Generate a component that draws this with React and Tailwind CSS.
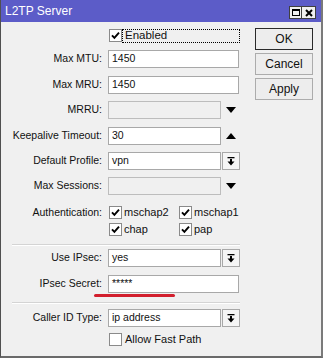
import React from "react";

const Check = ({ checked }) => (
  <span className="w-[13px] h-[13px] border border-[#8a8a8a] bg-white flex items-center justify-center shrink-0">
    {checked && (
      <svg width="9" height="9" viewBox="0 0 9 9">
        <path d="M1 4.3 L3.4 6.8 L8 1.6" stroke="#000" strokeWidth="1.9" fill="none" />
      </svg>
    )}
  </span>
);

const DropBtn = () => (
  <div className="ml-px w-[18px] h-[18px] border border-[#a8a8a8] bg-[#f5f5f5] flex items-center justify-center">
    <svg width="8" height="9" viewBox="0 0 8 9">
      <rect x="0.5" y="0" width="7" height="1.3" fill="#000" />
      <rect x="3" y="2" width="2" height="3" fill="#000" />
      <path d="M0.5 4.5 L7.5 4.5 L4 8.5 Z" fill="#000" />
    </svg>
  </div>
);

const Arrow = ({ up }) => (
  <div className="ml-px w-[18px] flex items-center justify-center">
    <svg width="10" height="6" viewBox="0 0 10 6">
      {up ? <path d="M0 6 L10 6 L5 0 Z" fill="#000" /> : <path d="M0 0 L10 0 L5 6 Z" fill="#000" />}
    </svg>
  </div>
);

const Row = ({ label, mt, children }) => (
  <div className={"flex items-center h-[18px] " + mt}>
    <div className="w-[101px] text-right whitespace-nowrap text-[10.5px]">{label}</div>
    <div className="ml-[6px] flex items-center">{children}</div>
  </div>
);

const Input = ({ value, short, disabled }) => (
  <div
    className={
      "h-[18px] border flex items-center pl-[3px] text-[10.5px] " +
      (short ? "w-[113px] " : "w-[131px] ") +
      (disabled ? "bg-[#f0f0f0] border-[#bdbdbd]" : "bg-white border-[#a8a8a8]")
    }
  >
    {value}
  </div>
);

const Sep = ({ mt }) => (
  <div className={"ml-[11px] w-[228px] border-t border-[#d4d4d4] border-b border-b-white " + mt}></div>
);

const Btn = ({ children, def, mt }) => (
  <div
    className={
      "w-[58px] h-[22px] flex items-center justify-center text-[12px] bg-[#ededed] " +
      (def ? "border border-[#2a2a2a] " : "border border-[#acacac] ") +
      mt
    }
  >
    {children}
  </div>
);

export default function App() {
  return (
    <div
      className="relative w-[323px] h-[361px] bg-white overflow-hidden text-[#111]"
      style={{ fontFamily: '"Liberation Sans", Arial, sans-serif' }}
    >
      <div className="w-[323px] h-[358px] bg-[#f0f0f0] border-l border-l-[#505050] border-r-2 border-r-[#7a7a7a] border-b-2 border-b-[#6a6a6a] flex flex-col">
        <div className="h-[22px] bg-[#5c5cc8] flex items-center justify-between pl-[4px] pr-[5px]">
          <span className="text-white text-[12px]">L2TP Server</span>
          <div className="flex mt-[3px]">
            <div className="w-[13px] h-[13px] bg-[#f0f0f0] border border-[#404040] flex items-center justify-center">
              <div className="w-[8px] h-[7px] border border-black border-t-2"></div>
            </div>
            <div className="w-[14px] h-[13px] bg-[#f0f0f0] border border-l-0 border-[#404040] flex items-center justify-center">
              <svg width="8" height="8" viewBox="0 0 8 8">
                <path d="M1 1 L7 7 M7 1 L1 7" stroke="#000" strokeWidth="2" />
              </svg>
            </div>
          </div>
        </div>
        <div className="flex flex-1">
          <div className="w-[254px] flex flex-col text-[10.5px]">
            <div className="flex items-center h-[15px] mt-[6px]">
              <div className="w-[108px]"></div>
              <Check checked />
              <div className="w-[118px] h-[14px] border border-dotted border-black flex items-center pl-[2px] text-[11.5px]">
                Enabled
              </div>
            </div>
            <Row label="Max MTU:" mt="mt-[7px]">
              <Input value="1450" />
            </Row>
            <Row label="Max MRU:" mt="mt-[8px]">
              <Input value="1450" />
            </Row>
            <Row label="MRRU:" mt="mt-[7px]">
              <Input short disabled />
              <Arrow />
            </Row>
            <Row label="Keepalive Timeout:" mt="mt-[8px]">
              <Input short value="30" />
              <Arrow up />
            </Row>
            <Row label="Default Profile:" mt="mt-[7px]">
              <Input short value="vpn" />
              <DropBtn />
            </Row>
            <Row label="Max Sessions:" mt="mt-[7px]">
              <Input short disabled />
              <Arrow />
            </Row>
            <div className="flex items-center h-[15px] mt-[10px]">
              <div className="w-[101px] text-right">Authentication:</div>
              <div className="ml-[7px] flex">
                <div className="w-[70px] flex items-center">
                  <Check checked />
                  <span className="ml-[2px] text-[11px]">mschap2</span>
                </div>
                <div className="flex items-center">
                  <Check checked />
                  <span className="ml-[2px] text-[11px]">mschap1</span>
                </div>
              </div>
            </div>
            <div className="flex items-center h-[15px] mt-[2px]">
              <div className="w-[101px]"></div>
              <div className="ml-[7px] flex">
                <div className="w-[70px] flex items-center">
                  <Check checked />
                  <span className="ml-[2px] text-[11px]">chap</span>
                </div>
                <div className="flex items-center">
                  <Check checked />
                  <span className="ml-[2px] text-[11px]">pap</span>
                </div>
              </div>
            </div>
            <Sep mt="mt-[7px]" />
            <Row label="Use IPsec:" mt="mt-[3px]">
              <Input short value="yes" />
              <DropBtn />
            </Row>
            <Row label="IPsec Secret:" mt="mt-[8px]">
              <Input value="*****" />
            </Row>
            <Sep mt="mt-[9px]" />
            <Row label="Caller ID Type:" mt="mt-[5px]">
              <Input short value="ip address" />
              <DropBtn />
            </Row>
            <div className="flex items-center h-[15px] mt-[5px]">
              <div className="w-[108px]"></div>
              <Check />
              <span className="ml-[3px] text-[11px]">Allow Fast Path</span>
            </div>
          </div>
          <div className="flex flex-col pt-[6px]">
            <Btn def>OK</Btn>
            <Btn mt="mt-[3px]">Cancel</Btn>
            <Btn mt="mt-[3px]">Apply</Btn>
          </div>
        </div>
      </div>
      <div className="absolute left-[94px] top-[294px] w-[81px] h-[3px] bg-[#d21f2d] rounded-full"></div>
    </div>
  );
}
